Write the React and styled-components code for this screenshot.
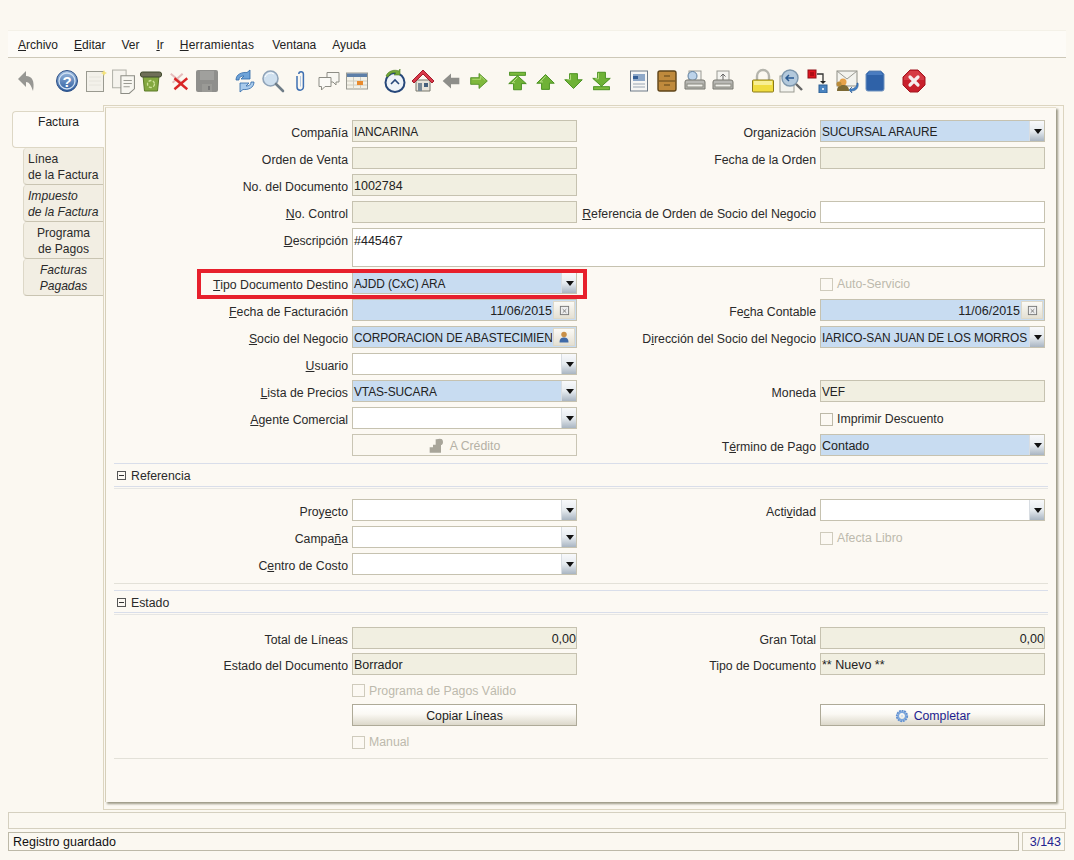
import React from "react";
import styled, { createGlobalStyle } from "styled-components";

const Global = createGlobalStyle`
  html, body { margin: 0; padding: 0; background: #fbf8f1; }
  body { font-family: "Liberation Sans", Arial, sans-serif; font-size: 12.3px; color: #1c1c1c; }
  u { text-underline-offset: 1px; }
`;

const Page = styled.div`
  width: 1074px; height: 860px; overflow: hidden; box-sizing: border-box;
  padding: 30px 8px 0; display: flex; flex-direction: column;
`;
const MenuBar = styled.div`
  height: 28px; box-sizing: border-box; padding: 2px 0 0 10px; display: flex; align-items: center; gap: 16px;
  background: #fdfbf7; border-bottom: 1px solid #cdc8b8; border-top: 1px solid #f4f1e8;
`;
const MenuItem = styled.span`
  font-size: 12px; color: #222;
  letter-spacing: ${p => p.$wide || 0}px;
  margin-right: ${p => p.$after || 0}px;
`;
const Toolbar = styled.div`
  height: 47px; box-sizing: border-box; padding: 9px 0 0 5px; display: flex; align-items: flex-start;
`;
const ToolGroup = styled.div`display: flex; margin-right: ${p => p.$gap}px;`;
const ToolCell = styled.div`
  width: 28px; height: 28px; display: flex; align-items: center; justify-content: center;
`;
const Main = styled.div`display: flex; height: 705px;`;
const TabColumn = styled.div`
  width: 96px; flex: none; padding-top: 6px; display: flex; flex-direction: column; position: relative; z-index: 1;
`;
const ActiveTab = styled.div`
  margin-left: 4px; height: 37px; box-sizing: border-box; padding-top: 2px; text-align: center; line-height: 16px; font-size: 12.1px;
  background: #fdfbf7; border: 1px solid #ddd7c5; border-right: none; border-radius: 4px 0 0 4px; color: #222;
`;
const Tab = styled.div`
  margin: 0 1px 0 15px; height: 37px; box-sizing: border-box; padding: 3px 0 0 ${p => (p.$center ? 0 : 4)}px;
  line-height: 16px; text-align: ${p => (p.$center ? "center" : "left")}; font-size: 12.1px;
  font-style: ${p => (p.$italic ? "italic" : "normal")};
  background: #f2eee3; border-left: 1px solid #ddd8c8; border-bottom: 1px solid #c9c4b2; border-radius: 4px 0 0 4px; color: #2a2a2a;
`;
const Outer = styled.div`
  flex: 1; margin: 0 2px 0 -1px; box-sizing: border-box; border: 1px solid #dcd5c0; padding: 1px 7px 7px 1px;
  display: flex;
`;
const Sheet = styled.div`
  flex: 1; box-sizing: border-box; border-left: 1px solid #d6cfb9; border-top: 1px solid #e6dfcc; background: #fcf9f3;
  box-shadow: 2px 2px 2px #9d9a88; padding: 12px 8px 0 8px; position: relative;
`;
const Grid = styled.div`
  display: grid; grid-template-columns: 234px 225px 235px 225px; column-gap: 4px; row-gap: 5px; grid-auto-rows: 22px;
  position: relative;
`;
const FormGrid = styled(Grid)`grid-template-rows: repeat(4, 22px) 39px;`;
const StateGrid = styled(Grid)`grid-template-rows: 21px 22px 19px 22px 20px;`;
const Label = styled.div`
  text-align: right; padding-top: 5px; white-space: nowrap; color: #2a2a2a; line-height: 17px;
`;
const Blank = styled.div``;
const Field = styled.div`
  box-sizing: border-box; height: ${p => (p.$tall ? "39px" : "22px")}; border: 1px solid #c6c2b0; display: flex; align-items: ${p => (p.$tall ? "flex-start" : "center")};
  padding: ${p => (p.$tall ? "4px" : "0")} 0 0 0; overflow: hidden; grid-column: ${p => (p.$span ? "2 / 5" : "auto")};
  background: ${p => ({ ro: "#f1efe1", req: "#c8dcf1", edit: "#fff" }[p.$kind])};
`;
const FieldText = styled.div`
  flex: 1; min-width: 0; padding: 1px 0 0 1px; white-space: nowrap; overflow: hidden; color: #222;
  font-size: ${p => (p.$caps ? "11.9px" : "12.5px")};
  letter-spacing: ${p => (p.$caps ? "-0.08px" : "0")};
  text-align: ${p => (p.$right ? "right" : "left")};
`;
const ArrowBtn = styled.div`
  width: 15px; box-sizing: border-box; flex: none; align-self: stretch; display: flex; align-items: center; justify-content: flex-end; padding-right: 2px;
  background: linear-gradient(180deg, #f8f9fb 0%, #e6ebef 50%, #a9b5c2 100%); border-left: 1px solid #d8dde2;
  &::after { content: ""; border-left: 4.5px solid transparent; border-right: 4.5px solid transparent; border-top: 5px solid #111; }
`;
const MiniBtn = styled.div`
  width: 22px; height: 18px; flex: none; margin: 0 1px 0 1px; display: flex; align-items: center; justify-content: center;
  background: linear-gradient(180deg, #fbfaf6, #e4e0d3); border: 1px solid #ded9c9; box-sizing: border-box;
`;
const CheckRow = styled.div`display: flex; align-items: center; gap: 4px; padding-top: 2px; color: ${p => (p.$off ? "#bdb9ad" : "#2a2a2a")};`;
const Box = styled.span`
  width: 11px; height: 11px; border: 1px solid ${p => (p.$off ? "#cfcbbc" : "#bdb9a8")}; background: transparent; display: block; flex: none;
`;
const Btn = styled.div`
  box-sizing: border-box; height: 22px; padding-top: 1px; border: 1px solid ${p => (p.$off ? "#c9c5b4" : "#aeaa98")}; display: flex; align-items: center; justify-content: center; gap: 5px;
  color: ${p => (p.$off ? "#b5b1a5" : p.$blue ? "#1d1d8f" : "#1c1c1c")};
  background: ${p => (p.$off ? "#fbf8f1" : "linear-gradient(180deg, #fff 0%, #fbf9f4 45%, #dcd8ca 100%)")};
`;
const Highlight = styled.div`
  position: absolute; left: 83px; top: 149px; width: 390px; height: 30px; box-sizing: border-box;
  border: 4.5px solid #e7202c; pointer-events: none;
`;
const SectionHead = styled.div`
  margin-top: ${p => p.$gap}px; box-sizing: border-box; height: ${p => p.$h}px; border-top: 1px solid #d9deea; border-bottom: 1px solid #d9deea;
  display: flex; align-items: center; gap: 5px; padding: ${p => p.$nudge}px 0 0 3px; margin-bottom: ${p => p.$after}px; position: relative;
  box-shadow: 0 1px 0 #fcf9f3, 0 2px 0 #e6e6e4; color: #2a2a2a;
`;
const Collapse = styled.span`
  width: 7px; height: 7px; border: 1px solid #555; display: flex; align-items: center; justify-content: center; flex: none;
  &::after { content: ""; width: 5px; height: 1px; background: #333; }
`;
const EndLine = styled.div`margin-top: ${p => p.$gap}px; height: 1px; background: #e3e1d8;`;
const MessageBar = styled.div`
  margin-top: 2px; height: 17px; border: 1px solid #d5d0c0; box-sizing: border-box;
`;
const StatusRow = styled.div`margin-top: 3px; display: flex; gap: 3px; height: 19px;`;
const Status = styled.div`
  flex: 1; box-sizing: border-box; border: 1px solid #bdb9a8; padding-left: 4px; line-height: 19px; font-size: 12.5px; color: #111;
`;
const Count = styled.div`
  width: 43px; box-sizing: border-box; border: 1px solid #cfcab9; text-align: right; padding-right: 3px; line-height: 19px; font-size: 12.5px; color: #23238f; margin-right: 1px;
`;

const Ic = ({ children, w = 24, h = 24 }) => (
  <svg width={w} height={h} viewBox="0 0 24 24" xmlns="http://www.w3.org/2000/svg">{children}</svg>
);

const Undo = () => <Ic><path d="M3 10 L11 2 V7 C17 7 20 12 18 22 C16 16 14 13 11 13 V18Z" fill="#979793" /></Ic>;
const Help = () => <Ic>
  <defs><linearGradient id="h1" x1="0" y1="0" x2="0" y2="1"><stop offset="0" stopColor="#9dbbe0" /><stop offset="1" stopColor="#2a5a9c" /></linearGradient></defs>
  <circle cx="12" cy="12" r="10.5" fill="url(#h1)" stroke="#2f5288" /><circle cx="12" cy="12" r="8" fill="none" stroke="#cfe0f2" strokeWidth="1.3" />
  <text x="12" y="17.5" textAnchor="middle" fontSize="15" fontWeight="700" fontFamily="Liberation Sans" fill="#fff">?</text></Ic>;
const NewDoc = () => <Ic><rect x="3.5" y="2.5" width="17" height="20" fill="#f3f1ea" stroke="#9a9a90" /><path d="M6 8h12M6 12h12M6 16h12" stroke="#e6e4dc" /><path d="M21 1l1 2 2 1-2 1-1 2-1-2-2-1 2-1z" fill="#f4e27a" /></Ic>;
const CopyDoc = () => <Ic w={25} h={25}><rect x="1.5" y="1" width="13" height="17" fill="#f5f3ed" stroke="#b3b3aa" /><path d="M9.5 6.5H22.500V19L17.500 23.500H9.500Z" fill="#f7f6f0" stroke="#8c8c84" /><path d="M12 11h8M12 14h8M12 17h6" stroke="#9a9a92" /></Ic>;
const Trash = () => <Ic><path d="M4 7h16l-1.500 15h-13z" fill="#84a840" stroke="#5c7a28" /><rect x="1.500" y="3" width="21" height="5" rx="2" fill="#6f6f58" stroke="#3f4a2c" /><circle cx="12" cy="15" r="3.500" fill="none" stroke="#cfe39a" strokeDasharray="3 1.500" strokeWidth="1.300" /></Ic>;
const Del = () => <Ic w={22} h={22}><path d="M3 4l13 11M16 4L5 14" stroke="#e6bcbc" strokeWidth="2.200" /><path d="M7 9l14 12M21 9L7 21" stroke="#d92626" strokeWidth="2.600" /></Ic>;
const Save = () => <Ic w={24} h={24}><rect x="1" y="1" width="22" height="22" rx="2" fill="#8f8f8c" /><rect x="5" y="2" width="14" height="9" fill="#a0a09d" /><rect x="7" y="15" width="10" height="8" fill="#9a9a96" /><rect x="13" y="17" width="2" height="4" fill="#777" /></Ic>;
const Refresh = () => <Ic><path d="M3 11C3 5 9 3 14 3.500L17 1v9h-9l3-3C8 7 6 8 6 11z" fill="#6ea3d8" stroke="#2f68a8" strokeWidth=".8" /><path d="M21 13c0 6-6 8-11 7.500L7 23v-9h9l-3 3c3 0 5-1 5-4z" fill="#a9cbec" stroke="#2f68a8" strokeWidth=".8" /></Ic>;
const Find = () => <Ic><circle cx="9.500" cy="9.500" r="7.500" fill="#cfe0ef" stroke="#8fa3b8" strokeWidth="1.600" /><path d="M4 8a6 6 0 0 1 9-3" stroke="#fff" fill="none" /><path d="M15 15l7 7" stroke="#6f7d88" strokeWidth="2.600" strokeLinecap="round" /></Ic>;
const Attach = () => <Ic><path d="M9 7v11a3.200 3.200 0 0 0 6.400 0V5a2.300 2.300 0 0 0-4.600 0" transform="translate(-1,0)" fill="none" stroke="#3f70b2" strokeWidth="1.500" /><path d="M10.500 7v10.500" stroke="#b7cbe4" transform="translate(1,0)" /></Ic>;
const Chat = () => <Ic><path d="M10 3.500h12v9.500h-3v3l-3-3h-6z" fill="#f8f7f2" stroke="#8d8d85" /><path d="M2 8.500h12v9h-6l-3.500 3.500v-3.500H2z" fill="#fbfaf6" stroke="#8d8d85" /></Ic>;
const Table = () => <Ic><rect x="1.500" y="4" width="21" height="16" fill="#f3f1e7" stroke="#9a9a92" /><rect x="2" y="4.500" width="20" height="3.500" fill="#5d7fa8" /><path d="M2 12h20M2 16h20M8.500 8v12M15.500 8v12" stroke="#cfccbf" /><rect x="12" y="12" width="6" height="4" fill="#e98a2c" /></Ic>;
const History = () => <Ic><circle cx="12" cy="13.500" r="9.500" fill="#eef3f8" stroke="#26477a" strokeWidth="2" /><path d="M8 15l4-4 4 4" fill="none" stroke="#26477a" strokeWidth="1.600" /><path d="M3 7C5 2 11 0 16 2l1-2v6h-6l2-2C10 3 7 4 5 8z" fill="#73a83a" stroke="#4a7a1e" strokeWidth=".6" /></Ic>;
const Home = () => <Ic><path d="M5 11v11h14V11z" fill="#e8e4da" stroke="#77766d" /><rect x="7" y="14" width="4" height="8" fill="#7a8a96" /><rect x="13" y="14" width="4" height="4" fill="#44607c" /><path d="M12 1L1 12l2 2 9-9 9 9 2-2z" fill="#d8394a" stroke="#a31c2a" /></Ic>;
const ArrowL = () => <Ic w={20} h={20}><path d="M2 12L12 3v5h10v8H12v5z" fill="#8e8e8a" /></Ic>;
const ArrowR = () => <Ic w={20} h={20}><path d="M22 12L12 3v5H2v8h10v5z" fill="#7fb83c" stroke="#4b8a1e" /><path d="M4 10h10V6l5 5" fill="none" stroke="#b6dc7c" /></Ic>;
const green = { fill: "#6fb237", stroke: "#3f8a16", strokeWidth: 1 };
const First = () => <Ic w={21} h={24}><rect x="3" y="2" width="18" height="3.500" fill="#7cba3e" stroke="#3f8a16" /><path d="M12 6L2 15h5.500v7h9v-7H22z" {...green} /><path d="M12 8l-6 6h3" fill="none" stroke="#bfe28c" /></Ic>;
const Up = () => <Ic w={21} h={21}><path d="M12 4L2 14h5.500v7h9v-7H22z" {...green} /><path d="M12 6l-6 6.500h3" fill="none" stroke="#bfe28c" /></Ic>;
const Down = () => <Ic w={21} h={21}><path d="M12 20L2 10h5.500V3h9v7H22z" {...green} /><path d="M8.500 4v6H5" fill="none" stroke="#bfe28c" /></Ic>;
const Last = () => <Ic w={21} h={24}><rect x="3" y="18.500" width="18" height="3.500" fill="#7cba3e" stroke="#3f8a16" /><path d="M12 18L2 9h5.500V2h9v7H22z" {...green} /><path d="M8.500 3v6.500H5" fill="none" stroke="#bfe28c" /></Ic>;
const Report = () => <Ic><rect x="3.500" y="2" width="17" height="20" fill="#f6f6f4" stroke="#6e7a88" /><rect x="6" y="5" width="12" height="7" fill="#8ea8c8" /><rect x="6" y="7" width="5" height="3" fill="#355f96" /><path d="M6 15h12M6 18h12" stroke="#9aa6b4" /></Ic>;
const Archive = () => <Ic><rect x="3" y="2" width="18" height="20" rx="2" fill="#bf8a3c" stroke="#5f4418" strokeWidth="1.400" /><path d="M4 12h16" stroke="#5f4418" /><path d="M9 7h6M9 16h6" stroke="#5f4418" strokeWidth="1.200" /></Ic>;
const Printer = ({ magnify }) => <Ic><rect x="6" y="2" width="12" height="12" fill="#f4f4f0" stroke="#9a9a94" />{magnify ? <circle cx="9.500" cy="7" r="4.500" fill="#bcd3ea" stroke="#5f7f9f" /> : <path d="M12 11V5m-2.500 2.500L12 5l2.500 2.500" stroke="#666" fill="none" />}<path d="M2 13a2 2 0 0 1 2-2h16a2 2 0 0 1 2 2v7H2z" fill="#b8b8b4" stroke="#77776f" /><rect x="4" y="15" width="16" height="3" fill="#efefea" stroke="#88887f" /></Ic>;
const Lock = () => <Ic w={24} h={26}><path d="M6 11V7a6 6 0 0 1 12 0v4" fill="none" stroke="#b5b5ad" strokeWidth="2.400" /><rect x="1.500" y="11" width="21" height="12" rx="1" fill="#f0dc40" stroke="#8a7a18" /><rect x="3" y="12" width="18" height="4" fill="#f8ef94" /></Ic>;
const ZoomAcross = () => <Ic><rect x="1" y="7" width="14" height="16" fill="#f3f3ee" stroke="#9a9a92" /><circle cx="11" cy="9" r="8" fill="#b3c9dc" stroke="#7d97ad" strokeWidth="1.400" /><path d="M15 9H7m3-3L7 9l3 3" fill="none" stroke="#2a5a92" strokeWidth="1.500" /><path d="M17 15l6 6" stroke="#666" strokeWidth="2.400" /></Ic>;
const Workflow = () => <Ic><rect x="1" y="1" width="8" height="8" fill="#e0141e" stroke="#901018" /><rect x="3" y="3" width="4" height="4" fill="#b00c14" /><path d="M10 5h6v8" fill="none" stroke="#333" strokeWidth="1.300" /><path d="M13 12h6l-3 3z" fill="#222" /><rect x="12" y="16" width="8" height="8" fill="#4a84c0" stroke="#2c5f94" /><rect x="15" y="19" width="2" height="2" fill="#cfe0f2" /></Ic>;
const Request = () => <Ic><rect x="2" y="2" width="20" height="15" fill="#f3f3ee" stroke="#8d8d85" /><path d="M2 2l10 8 10-8" fill="none" stroke="#9a9a92" /><circle cx="8" cy="13" r="3.500" fill="#e6a24a" /><path d="M2 22c0-5 3-6 6-6s6 1 6 6z" fill="#7d6a34" /><circle cx="4" cy="15" r="2.500" fill="#b98b3a" /><path d="M22 14c0 4-3 6-7 6l2-2-3 3 3 3-1-2c5 0 8-3 7-8z" fill="#3f7fc6" stroke="#2a5a96" strokeWidth=".6" /></Ic>;
const Product = () => <Ic><path d="M6 2h12l3 3v15a2 2 0 0 1-2 2H5a2 2 0 0 1-2-2V5z" fill="#2f62a8" stroke="#6f92bf" /><path d="M6 3h12l2 3H4z" fill="#4a7cc0" /></Ic>;
const Close = () => <Ic><path d="M8 1h8l7 7v8l-7 7H8l-7-7V8z" fill="#c8202c" stroke="#a31620" /><path d="M8 2h8l6 6v3H2V8z" fill="#e0525a" opacity=".55" /><path d="M8 8l8 8M16 8l-8 8" stroke="#f6eeee" strokeWidth="3.200" strokeLinecap="round" /></Ic>;

const groups = [
  { gap: 12, icons: [<Undo />] },
  { gap: 10, icons: [<Help />, <NewDoc />, <CopyDoc />, <Trash />, <Del />, <Save />] },
  { gap: 10, icons: [<Refresh />, <Find />, <Attach />, <Chat />, <Table />] },
  { gap: 10, icons: [<History />, <Home />, <ArrowL />, <ArrowR />] },
  { gap: 10, icons: [<First />, <Up />, <Down />, <Last />] },
  { gap: 12, icons: [<Report />, <Archive />, <Printer magnify />, <Printer />] },
  { gap: 11, icons: [<Lock />, <ZoomAcross />, <Workflow />, <Request />, <Product />] },
  { gap: 0, icons: [<Close />] },
];

const CalIcon = () => <Ic w={11} h={11}><rect x="3" y="3" width="18" height="18" fill="#eee" stroke="#777" strokeWidth="2" /><path d="M8 9l8 8M16 9l-8 8" stroke="#777" strokeWidth="2" /></Ic>;
const PersonIcon = () => <Ic w={12} h={12}><circle cx="12" cy="7" r="5.500" fill="#c89048" /><path d="M3 23c0-8 4-10 9-10s9 2 9 10z" fill="#3f6aa8" /></Ic>;
const GearIcon = () => <Ic w={14} h={14}><circle cx="12" cy="12" r="8" fill="none" stroke="#5f8fd0" strokeWidth="5" strokeDasharray="3 1" /><circle cx="12" cy="12" r="6.500" fill="none" stroke="#7ba6dc" strokeWidth="3" /><circle cx="12" cy="12" r="2" fill="#cfe0f2" /></Ic>;
const CreditIcon = () => <Ic w={16} h={16}><path d="M1 14h6v8H1zM6 10h12v12H6zM10 2h9v8h-9z" fill="#a8a59a" /><circle cx="16" cy="6" r="5" fill="#a8a59a" /></Ic>;

const Lbl = ({ t, u }) => {
  if (u === undefined) return <Label>{t}</Label>;
  return <Label>{t.slice(0, u)}<u>{t[u]}</u>{t.slice(u + 1)}</Label>;
};
const isCaps = v => /^[A-Z]{2}/.test(v);
const Text = ({ kind, v, right }) => <Field $kind={kind}><FieldText $right={right} $caps={isCaps(v)}>{v}</FieldText></Field>;
const Combo = ({ kind, v }) => <Field $kind={kind}><FieldText $caps={isCaps(v)}>{v}</FieldText><ArrowBtn /></Field>;
const Picker = ({ v, right, icon }) => <Field $kind="req"><FieldText $right={right} $caps={isCaps(v)}>{v}</FieldText><MiniBtn>{icon}</MiniBtn></Field>;
const Check = ({ t, off }) => <CheckRow $off={off}><Box $off={off} />{t}</CheckRow>;

export default function App() {
  return (
    <Page>
      <Global />
      <MenuBar>
        <MenuItem><u>A</u>rchivo</MenuItem>
        <MenuItem><u>E</u>ditar</MenuItem>
        <MenuItem $after={1}>Ver</MenuItem>
        <MenuItem><u>I</u>r</MenuItem>
        <MenuItem $wide={0.2} $after={2}><u>H</u>erramientas</MenuItem>
        <MenuItem>Ventana</MenuItem>
        <MenuItem>Ayuda</MenuItem>
      </MenuBar>
      <Toolbar>
        {groups.map((g, i) => (
          <ToolGroup key={i} $gap={g.gap}>{g.icons.map((ic, j) => <ToolCell key={j}>{ic}</ToolCell>)}</ToolGroup>
        ))}
      </Toolbar>
      <Main>
        <TabColumn>
          <ActiveTab>Factura</ActiveTab>
          <Tab>Línea<br />de la Factura</Tab>
          <Tab $italic>Impuesto<br />de la Factura</Tab>
          <Tab $center>Programa<br />de Pagos</Tab>
          <Tab $center $italic>Facturas<br />Pagadas</Tab>
        </TabColumn>
        <Outer>
          <Sheet>
            <FormGrid>
              <Lbl t="Compañía" /><Text kind="ro" v="IANCARINA" />
              <Lbl t="Organización" /><Combo kind="req" v="SUCURSAL ARAURE" />
              <Lbl t="Orden de Venta" /><Text kind="ro" v="" />
              <Lbl t="Fecha de la Orden" /><Text kind="ro" v="" />
              <Lbl t="No. del Documento" /><Text kind="ro" v="1002784" />
              <Blank /><Blank />
              <Lbl t="No. Control" u={0} /><Text kind="ro" v="" />
              <Lbl t="Referencia de Orden de Socio del Negocio" u={0} /><Text kind="edit" v="" />
              <Lbl t="Descripción" u={0} />
              <Field $kind="edit" $tall $span><FieldText>#445467</FieldText></Field>
              <Lbl t="Tipo Documento Destino" u={0} /><Combo kind="req" v="AJDD (CxC) ARA" />
              <Blank /><Check t="Auto-Servicio" off />
              <Lbl t="Fecha de Facturación" u={0} /><Picker v="11/06/2015" right icon={<CalIcon />} />
              <Lbl t="Fecha Contable" u={2} /><Picker v="11/06/2015" right icon={<CalIcon />} />
              <Lbl t="Socio del Negocio" u={0} /><Picker v="CORPORACION DE ABASTECIMIEN" icon={<PersonIcon />} />
              <Lbl t="Dirección del Socio del Negocio" u={1} /><Combo kind="req" v="IARICO-SAN JUAN DE LOS MORROS" />
              <Lbl t="Usuario" u={0} /><Combo kind="edit" v="" />
              <Blank /><Blank />
              <Lbl t="Lista de Precios" u={0} /><Combo kind="req" v="VTAS-SUCARA" />
              <Lbl t="Moneda" /><Text kind="ro" v="VEF" />
              <Lbl t="Agente Comercial" u={0} /><Combo kind="edit" v="" />
              <Blank /><Check t="Imprimir Descuento" />
              <Blank /><Btn $off><CreditIcon />A Crédito</Btn>
              <Lbl t="Término de Pago" u={1} /><Combo kind="req" v="Contado" />
              <Highlight />
            </FormGrid>
            <SectionHead $gap={7} $h={24} $nudge={1} $after={12}><Collapse />Referencia</SectionHead>
            <Grid>
              <Lbl t="Proyecto" u={4} /><Combo kind="edit" v="" />
              <Lbl t="Actividad" u={4} /><Combo kind="edit" v="" />
              <Lbl t="Campaña" u={5} /><Combo kind="edit" v="" />
              <Blank /><Check t="Afecta Libro" off />
              <Lbl t="Centro de Costo" u={1} /><Combo kind="edit" v="" />
            </Grid>
            <EndLine $gap={8} />
            <SectionHead $gap={6} $h={23} $nudge={2} $after={14}><Collapse />Estado</SectionHead>
            <StateGrid>
              <Lbl t="Total de Líneas" /><Text kind="ro" v="0,00" right />
              <Lbl t="Gran Total" /><Text kind="ro" v="0,00" right />
              <Lbl t="Estado del Documento" /><Text kind="ro" v="Borrador" />
              <Lbl t="Tipo de Documento" /><Text kind="ro" v="** Nuevo **" />
              <Blank /><Check t="Programa de Pagos Válido" off />
              <Blank /><Blank />
              <Blank /><Btn>Copiar Líneas</Btn>
              <Blank /><Btn $blue><GearIcon />Completar</Btn>
              <Blank /><Check t="Manual" off />
            </StateGrid>
            <EndLine $gap={7} />
          </Sheet>
        </Outer>
      </Main>
      <MessageBar />
      <StatusRow>
        <Status>Registro guardado</Status>
        <Count>3/143</Count>
      </StatusRow>
    </Page>
  );
}
